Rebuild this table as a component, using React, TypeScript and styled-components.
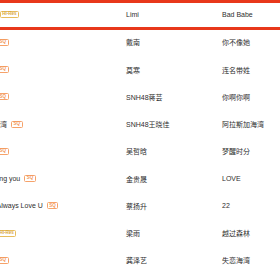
import React from "react";
import styled, { createGlobalStyle } from "styled-components";

type Quality = "sq" | "hires";

interface Track {
  name: string;
  singer: string;
  album: string;
  quality: Quality;
  active?: boolean;
}

const GlobalStyle = createGlobalStyle`
  body {
    margin: 0;
    background: #ffffff;
    overflow: hidden;
    font-family: "Liberation Sans", "Noto Sans CJK SC", sans-serif;
  }
`;

const Page = styled.div`
  width: 280px;
  height: 280px;
  overflow: hidden;
`;

// the list is scrolled sideways, so the name column starts off screen
const TrackList = styled.ul`
  list-style: none;
  margin: 0 0 0 -35px;
  padding: 0;
  width: 360px;
`;

const Row = styled.li<{ $active?: boolean }>`
  box-sizing: border-box;
  display: grid;
  grid-template-columns: 161px 96px 1fr;
  align-items: center;
  height: ${(p) => (p.$active ? "30px" : "27.25px")};
  padding-bottom: ${(p) => (p.$active ? "1px" : "2.5px")};
  border-top: ${(p) => (p.$active ? "3px solid #e8381b" : "none")};
  border-bottom: ${(p) => (p.$active ? "3px solid #e8381b" : "none")};
  font-size: 7px;
  color: #2e2e2e;
`;

const NameCell = styled.div`
  display: flex;
  align-items: center;
  gap: 4px;
  white-space: nowrap;
`;

const Cell = styled.div`
  white-space: nowrap;
`;

const Badge = styled.span<{ $kind: Quality }>`
  box-sizing: border-box;
  display: inline-flex;
  align-items: center;
  justify-content: center;
  height: 7px;
  padding: 0 1.5px;
  border: 0.8px solid ${(p) => (p.$kind === "sq" ? "#f6a26a" : "#e7bd5c")};
  border-radius: 1.5px;
  color: ${(p) => (p.$kind === "sq" ? "#f39a5c" : "#d9a63c")};
  font-size: 4.5px;
  font-weight: bold;
  line-height: 1;
  min-width: ${(p) => (p.$kind === "sq" ? "11px" : "17px")};
`;

const tracks: Track[] = [
  { name: "Bad Babe", singer: "Limi", album: "Bad Babe", quality: "hires", active: true },
  { name: "你不像她", singer: "戴南", album: "你不像她", quality: "sq" },
  { name: "连名带姓", singer: "莫寒", album: "连名带姓", quality: "sq" },
  { name: "你啊你啊", singer: "SNH48蒋芸", album: "你啊你啊", quality: "sq" },
  { name: "阿拉斯加海湾", singer: "SNH48王晓佳", album: "阿拉斯加海湾", quality: "sq" },
  { name: "梦醒时分", singer: "吴哲晗", album: "梦醒时分", quality: "sq" },
  { name: "Keep Missing you", singer: "金贵晟", album: "LOVE", quality: "sq" },
  { name: "Girl, I Will Always Love U", singer: "蔡扬升", album: "22", quality: "sq" },
  { name: "越过森林", singer: "梁雨", album: "越过森林", quality: "hires" },
  { name: "失恋海湾", singer: "龚泽艺", album: "失恋海湾", quality: "sq" },
];

export default function App() {
  return (
    <Page>
      <GlobalStyle />
      <TrackList>
        {tracks.map((t, index) => (
          <Row key={index} $active={t.active}>
            <NameCell>
              {t.name}
              <Badge $kind={t.quality}>{t.quality === "sq" ? "SQ" : "Hi-Res"}</Badge>
            </NameCell>
            <Cell>{t.singer}</Cell>
            <Cell>{t.album}</Cell>
          </Row>
        ))}
      </TrackList>
    </Page>
  );
}
